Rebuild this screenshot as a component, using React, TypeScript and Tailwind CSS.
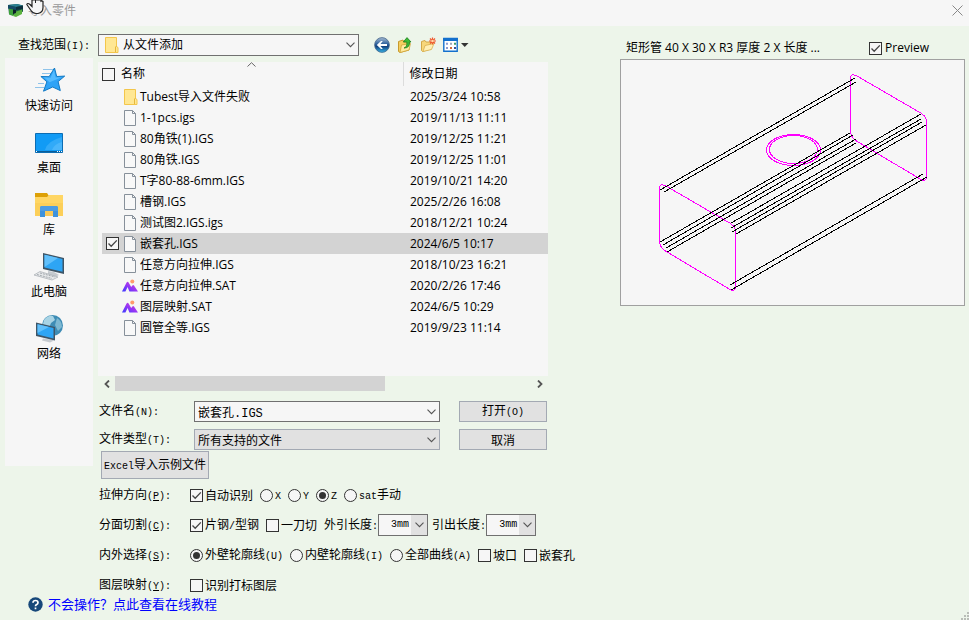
import React, { useState } from 'react'

const SONG = "font-['Noto_Sans_CJK_SC',sans-serif] text-[12px] leading-4"
const UI = "font-['Open_Sans','Noto_Sans_CJK_SC',sans-serif] text-[12px] leading-4"

type FileKind = 'folder' | 'doc' | 'sat'

const FILES: { name: string; date: string; kind: FileKind }[] = [
  { name: 'Tubest导入文件失败', date: '2025/3/24 10:58', kind: 'folder' },
  { name: '1-1pcs.igs', date: '2019/11/13 11:11', kind: 'doc' },
  { name: '80角铁(1).IGS', date: '2019/12/25 11:21', kind: 'doc' },
  { name: '80角铁.IGS', date: '2019/12/25 11:01', kind: 'doc' },
  { name: 'T字80-88-6mm.IGS', date: '2019/10/21 14:20', kind: 'doc' },
  { name: '槽钢.IGS', date: '2025/2/26 16:08', kind: 'doc' },
  { name: '测试图2.IGS.igs', date: '2018/12/21 10:24', kind: 'doc' },
  { name: '嵌套孔.IGS', date: '2024/6/5 10:17', kind: 'doc' },
  { name: '任意方向拉伸.IGS', date: '2018/10/23 16:21', kind: 'doc' },
  { name: '任意方向拉伸.SAT', date: '2020/2/26 17:46', kind: 'sat' },
  { name: '图层映射.SAT', date: '2024/6/5 10:29', kind: 'sat' },
  { name: '圆管全等.IGS', date: '2019/9/23 11:14', kind: 'doc' },
]

// ── TEXT ────────────────────────────────────────────────────────
// Latin runs are set half as wide as the Chinese characters
const Song: React.FC<{ text: string; hotkey?: string }> = ({ text, hotkey }) => (
  <span className="whitespace-nowrap">
    {text.split(/([\x20-\x7e]+)/).map((part, i) =>
      i % 2 === 0 ? part : (
        <span key={i} className="font-['Liberation_Mono',monospace] text-[10px]">
          {hotkey && part.includes(hotkey)
            ? <>{part.split(hotkey)[0]}<u>{hotkey}</u>{part.split(hotkey)[1]}</>
            : part}
        </span>
      )
    )}
  </span>
)

// ── CONTROLS ────────────────────────────────────────────────────
const CheckBox: React.FC<React.InputHTMLAttributes<HTMLInputElement>> = ({ className = '', ...props }) => (
  <span className={`grid shrink-0 place-items-center ${className}`}>
    <input type="checkbox" {...props}
      className="peer col-start-1 row-start-1 size-[13px] appearance-none border border-[#333] bg-[#f6f6f6]" />
    <svg viewBox="0 0 13 13" className="pointer-events-none invisible col-start-1 row-start-1 size-[13px] peer-checked:visible">
      <path d="M2.5 6.5 5.2 9.3 10.8 3.4" fill="none" stroke="#444" strokeWidth="1.3" />
    </svg>
  </span>
)

const Check: React.FC<{ text: string; on?: boolean }> = ({ text, on }) => (
  <label className="flex items-center gap-[2px]">
    <CheckBox defaultChecked={on} />
    <Song text={text} />
  </label>
)

const Radio: React.FC<{ name: string; text: string; on?: boolean }> = ({ name, text, on }) => (
  <label className="flex items-center gap-[2px]">
    <span className="grid shrink-0 place-items-center">
      <input type="radio" name={name} defaultChecked={on}
        className="peer col-start-1 row-start-1 size-[13px] appearance-none rounded-full border border-[#333] bg-[#f6f6f6]" />
      <span className="pointer-events-none invisible col-start-1 row-start-1 size-[7px] rounded-full bg-[#333] peer-checked:visible" />
    </span>
    <Song text={text} />
  </label>
)

const Chevron: React.FC<{ className?: string }> = ({ className = '' }) => (
  <svg viewBox="0 0 9 6" className={`pointer-events-none col-start-1 row-start-1 h-[6px] w-[9px] justify-self-end ${className}`}>
    <path d="M.5.7 4.5 4.7 8.5.7" fill="none" stroke="#555" strokeWidth="1.1" />
  </svg>
)

const LengthSelect: React.FC<{ label: string }> = ({ label }) => (
  <label className="flex items-center">
    <Song text={label} />
    <span className="grid items-center">
      <select className="col-start-1 row-start-1 h-[22px] w-[50px] appearance-none border border-[#707070] bg-[linear-gradient(to_left,#e1e1e1_16px,#f6f6f6_16px)] pl-3 font-['Liberation_Mono',monospace] text-[10px]">
        <option>3mm</option>
      </select>
      <Chevron className="mr-1" />
    </span>
  </label>
)

const OptionRow: React.FC<{ label: string; hotkey: string; children: React.ReactNode }> = ({ label, hotkey, children }) => (
  <div role="group" aria-label={label} className="flex h-[22px] items-center">
    <span className="w-[91px] shrink-0"><Song text={label} hotkey={hotkey} /></span>
    <div className="flex items-center gap-[7px]">{children}</div>
  </div>
)

// ── ICONS ───────────────────────────────────────────────────────
const FolderIcon = () => (
  <svg viewBox="0 0 14 16" className="h-4 w-[14px] shrink-0">
    <path d="M.5.5h11v9l1.500 1v5H.5z" fill="#ffe793" stroke="#f3c64b" />
    <path d="M10.500 15v-5l1-1" stroke="#e6b73d" fill="none" />
  </svg>
)

const DocIcon = () => (
  <svg viewBox="0 0 14 16" className="h-4 w-[14px] shrink-0">
    <path d="M.5.5h8l3 3v12H.5z" fill="#f8f8f8" stroke="#87909a" />
    <path d="M8.5.5v3h3" fill="none" stroke="#87909a" />
  </svg>
)

const SatIcon = () => (
  <svg viewBox="0 0 16 14" className="-ml-[2px] h-[14px] w-4 shrink-0">
    <defs>
      <linearGradient id="sat" x1="0" x2="1" y1="1" y2="0">
        <stop offset="0" stopColor="#3b3cff" />
        <stop offset=".5" stopColor="#9a35f5" />
        <stop offset="1" stopColor="#e14fc0" />
      </linearGradient>
    </defs>
    <path d="M0 12.500 4.600 3.500q1-1.600 2 0L9.200 8l1.200-1.500q.8-.9 1.600 0L16 12.500z M3.400 12.500h4L5.600 8z" fillRule="evenodd" fill="url(#sat)" />
    <circle cx="10.3" cy="2.6" r="2" fill="#ff9a6c" />
  </svg>
)

const FileIcon: React.FC<{ kind: FileKind }> = ({ kind }) =>
  kind === 'folder' ? <FolderIcon /> : kind === 'sat' ? <SatIcon /> : <DocIcon />

const StarIcon = () => (
  <svg viewBox="0 0 32 32" className="size-8">
    <path d="M10 4.500h11M9 8.500h9M5 18.500h6M2 22.500h9" stroke="#8fc3ea" strokeWidth="1" />
    <path d="M21.5 3l2.2 8.500 8-.4-6.600 5.500 2.200 9-7.600-3.600-9.200 4.200 3.400-9.400-6-5.300 8.200.2z" fill="#2ea3f7" stroke="#1279c4" />
    <path d="M21 5l1.6 7.6 6-.4-12 5-5.800-4.900 6.800.4z" fill="#55bbff" />
  </svg>
)

const DesktopIcon = () => (
  <svg viewBox="0 0 32 32" className="size-8">
    <path d="M2.5 6.500h27v19h-27z" fill="#119bf5" stroke="#0c6db3" />
    <path d="M12 23q2-9 17-13v13z" fill="#31aaf8" />
    <path d="M19 23q2-6 10-8v8z" fill="#4ab6fb" />
    <path d="M3 24h26v1H3z" fill="#0b5d98" />
    <path d="M3 24.500h1M24 24.500h1M26 24.500h1M28 24.500h1" stroke="#fff" />
  </svg>
)

const LibraryIcon = () => (
  <svg viewBox="0 0 32 32" className="size-8">
    <path d="M2 4h12l2 3v4H2z" fill="#dda006" />
    <path d="M2 8h12l2-2h14v21H2z" fill="#ffd664" />
    <path d="M2 14h28v13H2z" fill="#fccf59" />
    <path d="M7 28V19q0-2 2-2h14q2 0 2 2v9h-5v-6h-8v6z" fill="#3e92dc" />
    <path d="M7 22v-3q0-2 2-2h14q2 0 2 2v3z" fill="#4c9ce2" />
    <path d="M12 22h8v5h-8z" fill="#f9c958" />
  </svg>
)

const ComputerIcon = () => (
  <svg viewBox="0 0 32 32" className="size-8">
    <path d="M15 20l6 1 5 3-4 2-7-2z" fill="#c5cacf" />
    <path d="M10 2l21 5v16L10 18z" fill="#3f5566" />
    <path d="M11.500 3.800 29.500 8v12.800l-18-4.200z" fill="#2ea5f4" />
    <path d="M11.500 3.800 25 7 11.500 16z" fill="#61c0fb" />
    <path d="M1 24 7 20.500 25 26l-6 3z" fill="#e6e8ea" stroke="#a5abb0" strokeWidth=".7" />
    <path d="M4 23.500l15 4M7 22l15 4" stroke="#a5abb0" strokeWidth="1" strokeDasharray="2 1" />
  </svg>
)

const NetworkIcon = () => (
  <svg viewBox="0 0 32 32" className="size-8">
    <circle cx="19.500" cy="12.500" r="10.500" fill="#3e8cb5" />
    <path d="M11 7q4-5 9-4l2 4-4 3-2 5-4-1-2-3z" fill="#a8d3e4" />
    <path d="M24 5q5 3 5 9l-4 4-3-6z" fill="#7db8d2" />
    <path d="M10 25.500l8 1 3 1-4 2-8-2z" fill="#c5cacf" />
    <path d="M3 9.500l19 4.500v13.500L3 23z" fill="#3f5566" />
    <path d="M4.500 11.300 20.500 15v10.600l-16-4z" fill="#2ea5f4" />
    <path d="M4.500 11.300 16 14 4.500 20z" fill="#61c0fb" />
  </svg>
)

const BackIcon = () => (
  <svg viewBox="0 0 16 16" className="size-4">
    <defs>
      <linearGradient id="back" x1="0" x2="0" y1="0" y2="1">
        <stop offset="0" stopColor="#a9bdd3" />
        <stop offset=".45" stopColor="#2a5e9b" />
        <stop offset=".6" stopColor="#14437f" />
        <stop offset="1" stopColor="#35b5e9" />
      </linearGradient>
    </defs>
    <circle cx="8" cy="8" r="7.400" fill="url(#back)" stroke="#49688c" strokeWidth=".8" />
    <path d="M2.800 8 7 4h1.800L6.500 7H13v2H6.500l2.300 3H7z" fill="#fff" />
  </svg>
)

const UpFolderIcon = () => (
  <svg viewBox="0 0 16 16" className="size-4">
    <path d="M1.500 4.500 6 3l1 2 5-1v9l-9 2.500-1.500-1z" fill="#f5cf60" stroke="#c79a2d" />
    <path d="M3 15.500 4.500 8l9-1.500L12 13z" fill="#ffeaa0" stroke="#d0a53b" strokeWidth=".8" />
    <path d="M7 11q3.500-1 2.800-6H6.300L10 .6 14 5h-1.600q.6 6-5.400 6z" fill="#3dbb35" stroke="#1d7f1c" strokeWidth=".8" />
  </svg>
)

const NewFolderIcon = () => (
  <svg viewBox="0 0 16 16" className="size-4">
    <path d="M1.500 4.500 5 3.500l1 1.500h5v7l-8.500 2.500-1-1z" fill="#f7d77b" stroke="#d2a748" />
    <path d="M3 14.500 5 8.500l9-2-2.500 6z" fill="#ffefb5" stroke="#d8ae4c" strokeWidth=".8" />
    <path d="M12.500.5v7M9 4h7M10 1.500l5 5M15 1.500l-5 5" stroke="#f0542a" strokeWidth="1.200" />
    <circle cx="12.500" cy="4" r="1.300" fill="#ffd9a8" />
  </svg>
)

const ViewIcon = () => (
  <svg viewBox="0 0 26 16" className="h-4 w-[26px]">
    <path d="M.8 1.500h13.400v12.700H.8z" fill="#fff" stroke="#1370cd" strokeWidth="1.400" />
    <path d="M0 1h15v3H0z" fill="#1370cd" />
    <path d="M3 6.800h2M3 11h2" stroke="#8b9bd0" strokeWidth="2" />
    <path d="M7 6.800h2" stroke="#9aa7b8" strokeWidth="2" />
    <path d="M7 11h2" stroke="#d06a3a" strokeWidth="2" />
    <path d="M11 6.800h2" stroke="#3f9d68" strokeWidth="2" />
    <path d="M11 11h2" stroke="#31519c" strokeWidth="2" />
    <path d="M18 6h7.500l-3.750 4z" fill="#333" />
  </svg>
)

const AppIcon = () => (
  <svg viewBox="0 0 15 14" className="h-[14px] w-[15px]">
    <path d="M0 2 9 1l6 1.500v6L8 13l-7-2z" fill="#1c5a4a" />
    <path d="M0 2 9 1l6 1.500L8 4z" fill="#2a7f92" />
    <path d="M0 2l8 2v3L0 5.500z" fill="#154a66" />
    <path d="M8 4l7-1.500V6L8 7z" fill="#0c2f3d" />
    <path d="M1 5.700 5 6.500V13l-4-1.500z" fill="#3da03c" />
    <path d="M7 9 14 6.500V11l-6 3-3-1z" fill="#5cb23f" />
    <path d="M5 6.500 8 7v3L5 11z" fill="#0b2028" />
  </svg>
)

const HandCursor = () => (
  <svg viewBox="0 0 20 15" className="pointer-events-none absolute left-[26px] top-0 h-[15px] w-5">
    <path d="M6 0v6.500L4 4.500Q1.500 2.500 .8 4.500L5 10.500q2 3 5 3h2q5-1 5-6V1.500Q16 .5 15 1.200V0z" fill="#f6f6f6" stroke="#222" strokeWidth="1.200" />
    <path d="M9.500 0v3" stroke="#222" />
  </svg>
)

const PLACES = [
  { label: '快速访问', Icon: StarIcon },
  { label: '桌面', Icon: DesktopIcon },
  { label: '库', Icon: LibraryIcon },
  { label: '此电脑', Icon: ComputerIcon },
  { label: '网络', Icon: NetworkIcon },
]

// ── PREVIEW ─────────────────────────────────────────────────────
const EDGES = [
  [39, 130, 234, 18], [43, 132, 235, 22],
  [39, 182, 229, 73], [42, 185, 232, 75], [45, 188, 235, 79], [46, 192, 235, 83],
  [110, 163, 300, 54], [110, 168, 300, 59], [111, 172, 301, 62], [115, 174, 305, 65],
  [109, 225, 302, 114], [110, 230, 306, 117],
]
const SECTION = 'M38.500 128V183Q40 189 46 192L109 229.500Q114.500 232 114.500 227V170Q113 165 107 162L45 126Q39 123 38.500 128Z'

const TubePreview = () => (
  <svg viewBox="0 0 343 245" className="block w-full" shapeRendering="crispEdges" fill="none">
    <g stroke="#ff00ff">
      <path d={SECTION} />
      <path d={SECTION} transform="translate(191 -110)" />
      <ellipse cx="172.500" cy="90" rx="27" ry="15.500" />
      <ellipse cx="172.500" cy="89.500" rx="24" ry="14" />
    </g>
    <g stroke="#000">
      {EDGES.map(([x1, y1, x2, y2], i) => <line key={i} x1={x1} y1={y1} x2={x2} y2={y2} />)}
    </g>
  </svg>
)

// ── FILE LIST ───────────────────────────────────────────────────
const FileTable = () => {
  const [selected, setSelected] = useState('嵌套孔.IGS')

  return (
    <div className="relative min-h-[314px] bg-[#f6f6f6] pl-1">
      <svg viewBox="0 0 9 5" className="absolute left-[149px] top-0 h-[5px] w-[9px]">
        <path d="M.5 4.500 4.500.7 8.500 4.500" fill="none" stroke="#666" />
      </svg>
      <table className={`w-full table-fixed border-collapse text-left ${UI}`}>
        <thead>
          <tr className="h-6">
            <th className="w-[301px] border-r border-[#dcdcdc] p-0 font-normal">
              <label className="flex items-center gap-[6px]"><CheckBox />名称</label>
            </th>
            <th className="p-0 pl-[6px] font-normal">修改日期</th>
          </tr>
        </thead>
        <tbody>
          {FILES.map(f => {
            const on = f.name === selected
            return (
              <tr key={f.name} onClick={() => setSelected(f.name)} className={`h-[21px] ${on ? 'bg-[#d3d3d3]' : ''}`}>
                <td className="p-0 pl-1">
                  <span className="flex items-center">
                    <CheckBox className={on ? '' : 'opacity-0'} aria-label={f.name} checked={on} readOnly />
                    <span className="ml-[5px] flex w-4 items-center"><FileIcon kind={f.kind} /></span>
                    <span className="whitespace-nowrap">{f.name}</span>
                  </span>
                </td>
                <td className="whitespace-nowrap p-0 pl-[7px]">{f.date}</td>
              </tr>
            )
          })}
        </tbody>
      </table>
    </div>
  )
}

const ScrollBar = () => (
  <div className="flex h-[15px] items-center">
    <button aria-label="向左滚动" className="flex w-[17px] justify-center">
      <svg viewBox="0 0 6 8" className="h-2 w-[6px]"><path d="M5 .5 1.500 4 5 7.500" fill="none" stroke="#555" strokeWidth="1.800" /></svg>
    </button>
    <div className="h-full flex-1"><div className="h-full w-[65%] bg-[#d3d3d3]" /></div>
    <button aria-label="向右滚动" className="flex w-[17px] justify-center">
      <svg viewBox="0 0 6 8" className="h-2 w-[6px]"><path d="M1 .5 4.500 4 1 7.500" fill="none" stroke="#555" strokeWidth="1.800" /></svg>
    </button>
  </div>
)

const BUTTON = 'border border-[#a3a9b3] bg-[#e1e1e1]'

const FileFields = () => (
  <div className="grid w-[449px] grid-cols-[95px_246px_88px] items-center gap-y-[7px] pl-[1px] pt-[10px]">
    <label htmlFor="file-name"><Song text="文件名(N):" /></label>
    <span className="grid items-center">
      <input id="file-name" defaultValue="嵌套孔.IGS"
        className="col-start-1 row-start-1 h-[21px] w-full border border-[#707070] bg-[#f6f6f6] px-[3px] font-['Liberation_Mono','Noto_Sans_CJK_SC',monospace] text-[12px]" />
      <Chevron className="mr-1" />
    </span>
    <button className={`ml-[19px] h-[21px] w-[88px] ${BUTTON}`}><Song text="打开(O)" /></button>

    <label htmlFor="file-type"><Song text="文件类型(T):" /></label>
    <span className="grid items-center">
      <select id="file-type" className={`col-start-1 row-start-1 h-[21px] w-full appearance-none px-[3px] ${BUTTON}`}>
        <option>所有支持的文件</option>
      </select>
      <Chevron className="mr-1" />
    </span>
    <button className={`ml-[19px] h-[21px] w-[88px] ${BUTTON}`}><Song text="取消" /></button>
  </div>
)

export default function App() {
  return (
    <div className={`relative flex min-h-screen flex-col overflow-hidden bg-[#edf5ea] text-black ${SONG}`}>
      <header className="flex h-[26px] items-start justify-between bg-[#f6f6f6] pl-2 pr-[6px] pt-[2px]">
        <div className="flex items-center gap-[5px]">
          <AppIcon />
          <h1 className="text-[#999]">导入零件</h1>
        </div>
        <button aria-label="关闭" className="pt-[3px]">
          <svg viewBox="0 0 11 11" className="size-[11px]"><path d="M.5.5l10 10M10.500.5l-10 10" stroke="#888" /></svg>
        </button>
        <HandCursor />
      </header>

      <main className="flex items-start gap-[44px] pr-1 pt-2">
        <div className="w-[576px] shrink-0">
          <div className="flex h-[22px] items-center">
            <label htmlFor="look-in" className="w-[98px] shrink-0 pl-[18px]"><Song text="查找范围(I):" /></label>
            <span className="grid w-[261px] items-center">
              <select id="look-in" className={`col-start-1 row-start-1 h-[22px] w-full appearance-none border border-[#707070] bg-[#f6f6f6] pl-6 ${UI}`}>
                <option>从文件添加</option>
              </select>
              <span className="pointer-events-none col-start-1 row-start-1 pl-[7px]"><FolderIcon /></span>
              <Chevron className="mr-1" />
            </span>
            <div className="flex gap-[7px] pl-[15px]">
              <button aria-label="后退"><BackIcon /></button>
              <button aria-label="向上一级"><UpFolderIcon /></button>
              <button aria-label="新建文件夹"><NewFolderIcon /></button>
              <button aria-label="查看"><ViewIcon /></button>
            </div>
          </div>

          <div className="flex items-start pl-[5px] pt-[2px]">
            <nav className={`flex min-h-[408px] w-[88px] shrink-0 flex-col items-center gap-3 bg-[#f6f6f6] pt-[7px] ${UI}`}>
              {PLACES.map(({ label, Icon }) => (
                <button key={label} className="flex flex-col items-center">
                  <Icon />
                  <span className="leading-[18px]">{label}</span>
                </button>
              ))}
            </nav>

            <div className="pl-[5px] pt-1">
              <div className="w-[450px]">
                <FileTable />
                <ScrollBar />
                <FileFields />
              </div>
              <button className={`ml-[3px] mt-[1px] block h-7 w-[108px] ${BUTTON}`}><Song text="Excel导入示例文件" /></button>

              <div className="flex flex-col gap-2 pl-[1px] pt-[5px]">
                <OptionRow label="拉伸方向(P):" hotkey="P">
                  <Check text="自动识别" on />
                  <Radio name="axis" text="X" />
                  <Radio name="axis" text="Y" />
                  <Radio name="axis" text="Z" on />
                  <Radio name="axis" text="sat手动" />
                </OptionRow>
                <OptionRow label="分面切割(C):" hotkey="C">
                  <Check text="片钢/型钢" on />
                  <Check text="一刀切" />
                  <div className="flex gap-1">
                    <LengthSelect label="外引长度:" />
                    <LengthSelect label="引出长度:" />
                  </div>
                </OptionRow>
                <OptionRow label="内外选择(S):" hotkey="S">
                  <Radio name="side" text="外壁轮廓线(U)" on />
                  <Radio name="side" text="内壁轮廓线(I)" />
                  <Radio name="side" text="全部曲线(A)" />
                  <Check text="坡口" />
                  <Check text="嵌套孔" />
                </OptionRow>
                <OptionRow label="图层映射(Y):" hotkey="Y">
                  <Check text="识别打标图层" />
                </OptionRow>
              </div>
            </div>
          </div>

          <a href="#help" className="ml-7 flex w-fit items-center gap-[5px] text-[13px] text-[#0000ff]">
            <svg viewBox="0 0 15 15" className="size-[15px]">
              <circle cx="7.500" cy="7.500" r="7.200" fill="#17487a" />
              <path d="M5 5.800Q5 3.500 7.500 3.500T10 5.700Q10 7 8.500 7.600 7.500 8 7.500 9.300M7.500 10.500v1.800" fill="none" stroke="#fff" strokeWidth="1.700" />
            </svg>
            不会操作？点此查看在线教程
          </a>
        </div>

        <section className="min-w-0 flex-1 pt-[5px]">
          <div className={`flex h-5 items-start justify-between pl-[6px] pr-9 pt-[1px] ${UI}`}>
            <span className="whitespace-nowrap">矩形管 40 X 30 X R3 厚度 2 X 长度 ...</span>
            <label className="flex items-center gap-[3px]"><CheckBox defaultChecked />Preview</label>
          </div>
          <div className="border border-[#a0a0a0] bg-[#f6f6f6]"><TubePreview /></div>
        </section>
      </main>

      <svg viewBox="0 0 8 8" className="absolute bottom-0 right-0 size-2">
        <path d="M6 0h2v2H6zM3 3h2v2H3zM6 3h2v2H6zM0 6h2v2H0zM3 6h2v2H3zM6 6h2v2H6z" fill="#b9bdb7" />
      </svg>
    </div>
  )
}
